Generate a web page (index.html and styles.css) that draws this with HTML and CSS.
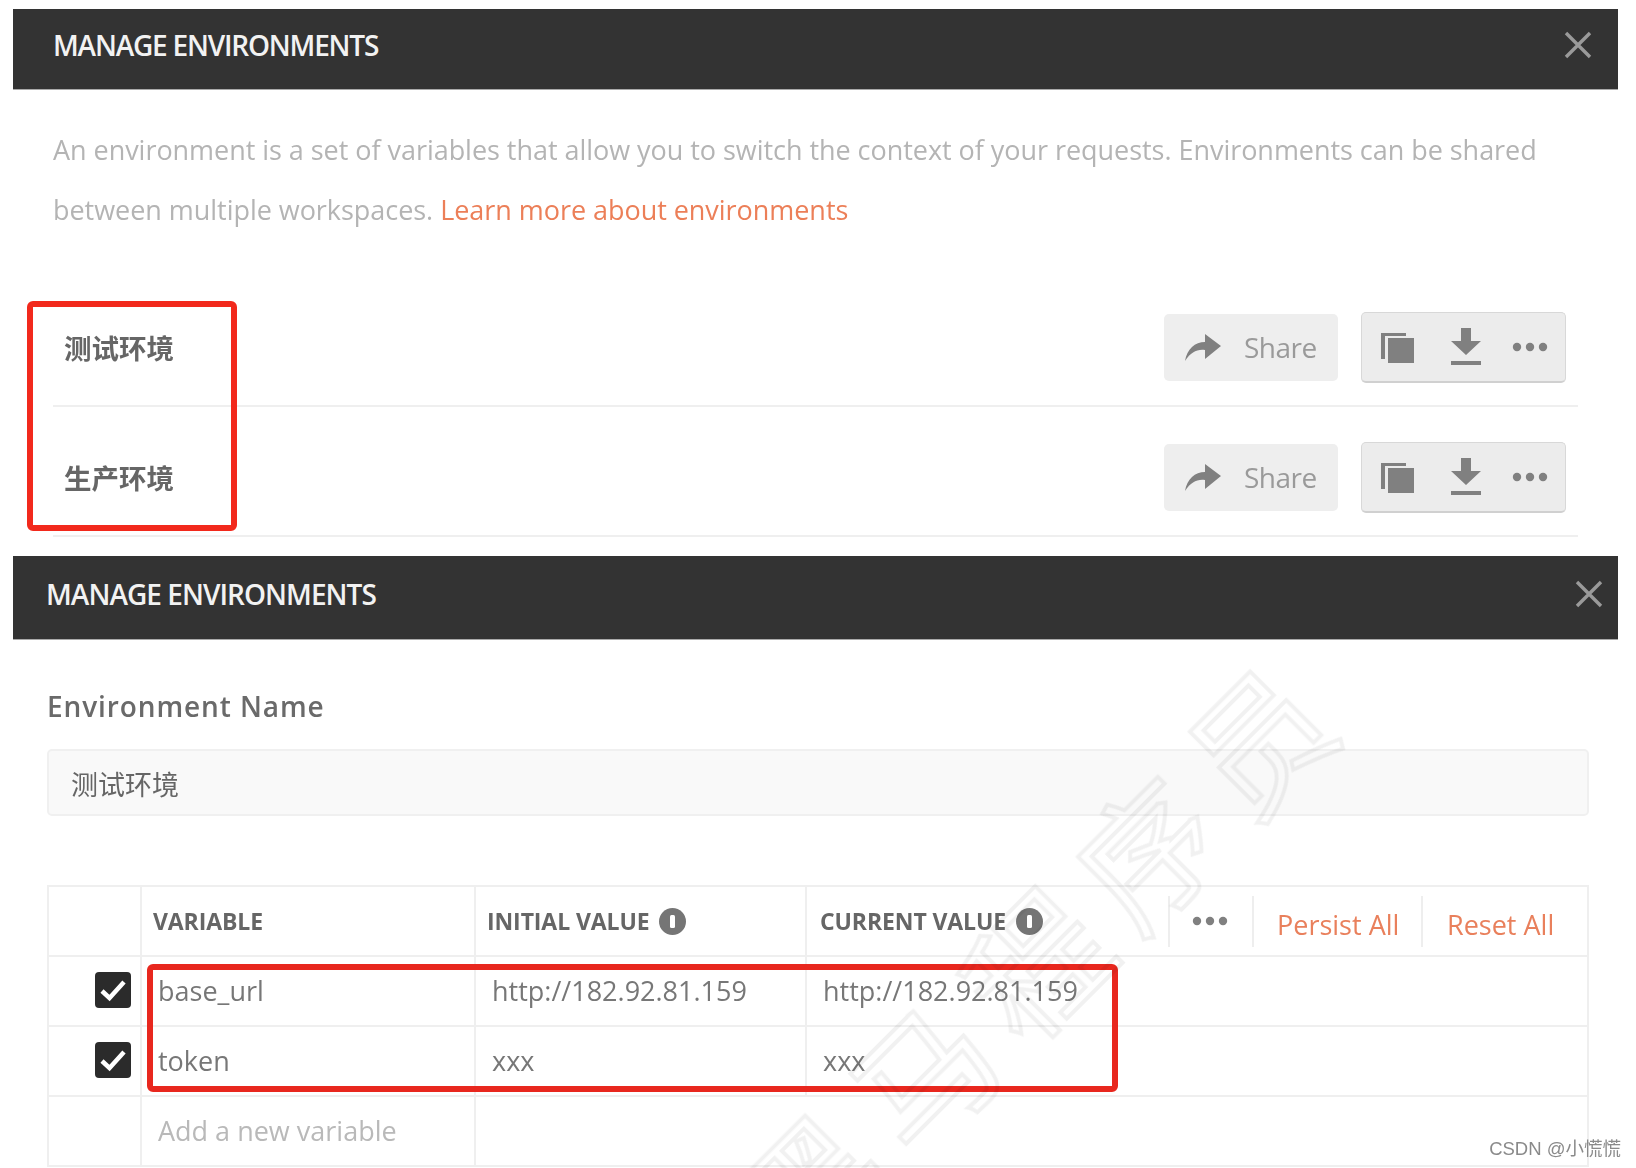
FILE: index.html
```html
<!DOCTYPE html>
<html lang="zh-CN">
<head>
<meta charset="utf-8">
<title>Manage Environments</title>
<link rel="stylesheet" href="styles.css">
</head>
<body>
<svg class="defs" width="0" height="0" aria-hidden="true">
  <defs>
    <symbol id="i-share" viewBox="0 0 36 27"><path d="M0 27C2 15 10 8 20 8V0L36 12 20 25V16C12 15 6 18 0 27Z"/></symbol>
    <symbol id="i-copy" viewBox="0 0 33 32"><path d="M0 2h25v3H4v23H0Z M7 7h26v25H7Z"/></symbol>
    <symbol id="i-down" viewBox="0 0 30 37"><path d="M10 0h10v13h10L15 27 0 13h10Z M0 33h30v4H0Z"/></symbol>
    <symbol id="i-dots" viewBox="0 0 36 10"><circle cx="5" cy="5" r="4.2"/><circle cx="18" cy="5" r="4.2"/><circle cx="31" cy="5" r="4.2"/></symbol>
    <symbol id="i-close" viewBox="0 0 28 28"><path d="M2 2 26 26M26 2 2 26" fill="none" stroke="currentColor" stroke-width="3.4"/></symbol>
    <symbol id="i-info" viewBox="0 0 27 27"><circle cx="13.5" cy="13.5" r="13.5"/><rect x="11" y="7" width="5" height="13" rx="1.5" fill="#fff"/></symbol>
    <symbol id="i-check" viewBox="0 0 36 36"><rect width="36" height="36" rx="4" fill="#2b2b2b"/><path d="M7 19 14.500 26 29 10" fill="none" stroke="#fff" stroke-width="4.500"/></symbol>
  </defs>
</svg>
<main class="page">
  <section class="panel panel-list">
    <header class="bar bar-list">
      <h1 class="bar-title">MANAGE ENVIRONMENTS</h1>
      <svg class="close"><use href="#i-close"/></svg>
    </header>
    <p class="intro">An environment is a set of variables that allow you to switch the context of your requests. Environments can be shared<br>between multiple workspaces. <a class="link">Learn more about environments</a></p>
    <div class="env-row">
      <span class="env-name">测试环境</span>
      <div class="actions">
        <button class="share"><svg class="icon-share"><use href="#i-share"/></svg><span>Share</span></button>
        <div class="tools">
          <svg class="icon-copy"><use href="#i-copy"/></svg>
          <svg class="icon-down"><use href="#i-down"/></svg>
          <svg class="icon-dots"><use href="#i-dots"/></svg>
        </div>
      </div>
    </div>
    <div class="env-row">
      <span class="env-name">生产环境</span>
      <div class="actions">
        <button class="share"><svg class="icon-share"><use href="#i-share"/></svg><span>Share</span></button>
        <div class="tools">
          <svg class="icon-copy"><use href="#i-copy"/></svg>
          <svg class="icon-down"><use href="#i-down"/></svg>
          <svg class="icon-dots"><use href="#i-dots"/></svg>
        </div>
      </div>
    </div>
    <div class="mark mark-names"></div>
  </section>

  <section class="panel panel-edit">
    <header class="bar bar-edit">
      <h2 class="bar-title bar-title-edit">MANAGE ENVIRONMENTS</h2>
      <svg class="close"><use href="#i-close"/></svg>
    </header>
    <div class="edit-body">
      <label class="field-label">Environment Name</label>
      <div class="field">测试环境</div>
      <div class="table">
        <div class="tr tr-head">
          <div class="td"></div>
          <div class="td th">VARIABLE</div>
          <div class="td th th-initial">INITIAL VALUE <svg class="icon-info"><use href="#i-info"/></svg></div>
          <div class="td th th-current">CURRENT VALUE <svg class="icon-info"><use href="#i-info"/></svg></div>
          <div class="head-tools">
            <span class="tool tool-dots"><svg class="icon-dots"><use href="#i-dots"/></svg></span>
            <span class="tool tool-persist">Persist All</span>
            <span class="tool tool-reset">Reset All</span>
          </div>
        </div>
        <div class="tr">
          <div class="td td-check"><svg class="check"><use href="#i-check"/></svg></div>
          <div class="td cell">base_url</div>
          <div class="td cell cell-val">http://182.92.81.159</div>
          <div class="td cell cell-val">http://182.92.81.159</div>
          <div class="rest"></div>
        </div>
        <div class="tr">
          <div class="td td-check"><svg class="check"><use href="#i-check"/></svg></div>
          <div class="td cell">token</div>
          <div class="td cell cell-val">xxx</div>
          <div class="td cell cell-val">xxx</div>
          <div class="rest"></div>
        </div>
        <div class="tr tr-last">
          <div class="td"></div>
          <div class="td cell cell-new">Add a new variable</div>
          <div class="rest rest-wide"></div>
        </div>
      </div>
    </div>
    <div class="mark mark-vars"></div>
  </section>
  <div class="watermark">黑马程序员</div>
  <div class="credit">CSDN @小慌慌</div>
</main>
</body>
</html>
```
FILE: styles.css
```css
* { box-sizing: border-box; }
html, body { margin: 0; background: #fff; }
body { font-family: "Open Sans", "Noto Sans CJK SC", sans-serif; color: #666; }
.defs { position: absolute; }
.page { position: relative; width: 1636px; height: 1168px; padding: 9px 18px 0 13px; overflow: hidden; filter: blur(0.7px); }
.panel { position: relative; }
.panel-list { height: 547px; }
.bar { display: flex; align-items: center; justify-content: space-between; background: #333; border-bottom: 1px solid #aaa; }
.bar-list { height: 81px; padding: 0 26px 8px 40px; }
.bar-edit { height: 84px; padding: 0 15px 8px 33px; }
.bar-title { margin: 0; color: #f2f2f2; font-size: 28px; font-weight: 600; letter-spacing: -1.2px; white-space: nowrap; }
.bar-title-edit { letter-spacing: -0.95px; }
.close { width: 28px; height: 28px; color: #9a9a9a; }
.intro { margin: 30px 0 37px 40px; font-size: 27px; line-height: 60px; color: #b4b4b4; letter-spacing: -0.04px; white-space: nowrap; }
.link { color: #ec7f58; }
.env-row { display: flex; align-items: center; justify-content: space-between; height: 130px; margin: 0 40px 0 40px; padding: 12px 12px 0 11px; border-bottom: 2px solid #efefef; }
.env-name { font-size: 27.5px; font-weight: 700; color: #666; }
.actions { display: flex; align-items: center; gap: 23px; }
.share { display: flex; align-items: center; gap: 23px; width: 174px; height: 67px; padding: 0 0 0 21px; border: 0; border-radius: 5px; background: #eeeeee; font: inherit; font-size: 28px; color: #9a9a9a; letter-spacing: -0.5px; }
.icon-share { width: 36px; height: 27px; fill: #808080; }
.tools { display: flex; align-items: center; width: 205px; height: 71px; padding: 0 17px 0 19px; border: 1px solid #d8d8d8; border-bottom: 2px solid #d0d0d0; border-radius: 5px; background: #ececec; }
.icon-copy { width: 33px; height: 32px; fill: #808080; }
.icon-down { width: 30px; height: 37px; margin-left: 37px; fill: #808080; }
.icon-dots { width: 36px; height: 10px; fill: #808080; }
.tools .icon-dots { margin-left: auto; }
.mark { position: absolute; border-style: solid; border-width: 6px; pointer-events: none; }
.mark-names { left: 14px; top: 292px; width: 210px; height: 230px; border-color: #f2291c; border-radius: 6px; }
.edit-body { padding: 0 29px 0 34px; }
.field-label { display: block; margin-top: 46px; font-size: 28px; line-height: 40px; font-weight: 600; color: #6a6a6a; letter-spacing: 0.9px; }
.field { display: flex; align-items: center; height: 67px; margin-top: 23px; padding-left: 22px; padding-top: 1px; border: 2px solid #f0f0f0; border-radius: 5px; background: #f9f9f9; font-size: 27px; color: #666; }
.table { margin-top: 69px; border: 2px solid #efefef; border-bottom: 0; }
.tr { display: grid; grid-template-columns: 93px 334px 331px 1fr; grid-template-rows: minmax(0, 1fr); height: 70px; border-bottom: 2px solid #efefef; }
.td { display: flex; align-items: center; border-right: 2px solid #efefef; }
.th { padding-left: 11px; font-size: 23px; font-weight: 700; color: #666; letter-spacing: -0.1px; white-space: nowrap; gap: 10px; }
.td:nth-child(4) { border-right: 0; }
.icon-info { width: 27px; height: 27px; fill: #757575; flex: none; }
.head-tools { display: flex; align-items: center; justify-content: flex-end; position: relative; }
.tr-head { grid-template-columns: 93px 334px 331px 345px 1fr; }
.tr-head .td:nth-child(4) { border-right: 0; padding-left: 13px; }
.tool { display: flex; align-items: center; height: 51px; border-left: 2px solid #eeeeee; font-size: 27px; color: #e9805c; white-space: nowrap; }
.tool-dots { width: 84px; padding-left: 22px; }
.tool-persist { width: 169px; padding-left: 23px; padding-top: 6px; }
.tool-reset { width: 166px; padding-left: 24px; padding-top: 6px; }
.td-check { justify-content: flex-end; padding-right: 9px; padding-bottom: 3px; }
.check { width: 36px; height: 36px; }
.cell { padding-left: 16px; padding-bottom: 2px; font-size: 27px; color: #777; white-space: nowrap; }
.cell-val { padding-left: 16px; }
.cell-new { color: #b9b9b9; }
.tr-last { grid-template-columns: 93px 334px 1fr; border-bottom: 2px solid #efefef; }
.mark-vars { left: 134px; top: 408px; width: 971px; height: 128px; border-color: #e8271e; border-radius: 6px; }
.watermark { position: absolute; left: 740px; top: 1114px; font-size: 136px; line-height: 140px; letter-spacing: 22px; font-family: "Noto Sans CJK SC", sans-serif; font-weight: 400; white-space: nowrap; color: transparent; -webkit-text-stroke: 4px rgba(0,0,0,.055); transform-origin: 68px 70px; transform: rotate(-45deg); pointer-events: none; }
.credit { position: absolute; right: 15px; top: 1137px; font-family: "Liberation Sans", "Noto Sans CJK SC", sans-serif; font-size: 18.5px; line-height: 24px; color: #8a8a8a; }
```
